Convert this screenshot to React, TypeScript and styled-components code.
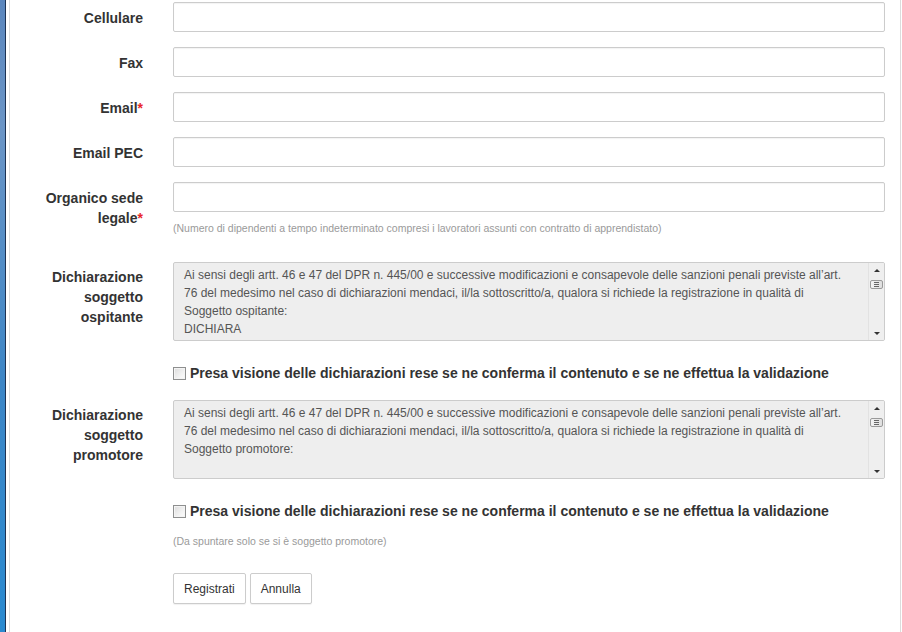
import React from 'react';
import styled, { createGlobalStyle } from 'styled-components';

const GlobalStyle = createGlobalStyle`
  html, body {
    margin: 0;
    padding: 0;
    background: #fff;
    font-family: "Liberation Sans", Arial, sans-serif;
    color: #333;
    overflow: hidden;
  }
`;

const Page = styled.div`
  display: flex;
  height: 632px;
  width: 902px;
`;

const EdgeStrip = styled.div`
  width: 5px;
  flex-shrink: 0;
  background: linear-gradient(180deg, #5a86bd 0%, #6b95c6 20%, #3d86c6 60%, #2a8ad0 100%);
  border-right: 1px solid #1d3354;
  margin-right: 3px;
`;

const Panel = styled.div`
  width: 890px;
  border-left: 1px solid #dcdcdc;
  border-right: 1px solid #dcdcdc;
`;

const Form = styled.form`
  padding: 2px 15px 0 0;
`;

const Row = styled.div<{ $gap?: number }>`
  display: grid;
  grid-template-columns: 163px 1fr;
  margin-bottom: ${p => (p.$gap ?? 15)}px;
`;

const Label = styled.label<{ $top?: number }>`
  padding: ${p => p.$top ?? 6}px 30px 0 15px;
  text-align: right;
  font-weight: bold;
  font-size: 14px;
  line-height: 20px;
  color: #333;
`;

const Required = styled.span`
  color: #e8262b;
`;

const Field = styled.div`
  display: flex;
  flex-direction: column;
  min-width: 0;
`;

const Input = styled.input`
  box-sizing: border-box;
  height: 30px;
  width: 100%;
  border: 1px solid #ccc;
  border-radius: 2px;
  box-shadow: inset 0 1px 1px rgba(0, 0, 0, 0.05);
  padding: 4px 10px;
  font: 12px "Liberation Sans", Arial, sans-serif;
  color: #555;
  background: #fff;
`;

const Help = styled.span<{ $top?: number; $bottom?: number }>`
  margin-top: ${p => p.$top ?? 8}px;
  margin-bottom: ${p => p.$bottom ?? 0}px;
  font-size: 10.5px;
  line-height: 16px;
  color: #9a9a9a;
`;

const TextBox = styled.div`
  box-sizing: border-box;
  display: flex;
  height: 79px;
  border: 1px solid #ccc;
  border-radius: 2px;
  background: #eee;
  overflow: hidden;
`;

const ReadOnlyText = styled.textarea`
  flex: 1;
  min-width: 0;
  border: none;
  resize: none;
  background: transparent;
  overflow: hidden;
  padding: 3px 20px 3px 10px;
  margin: 0;
  font: 12px/18px "Liberation Sans", Arial, sans-serif;
  color: #555;
  outline: none;
`;

const ScrollTrack = styled.div`
  width: 16px;
  flex-shrink: 0;
  border-left: 1px solid #e2e2e2;
  background: #efefef;
  display: flex;
  flex-direction: column;
  align-items: center;
  padding: 6px 0 5px;
  box-sizing: border-box;
`;

const Arrow = styled.span<{ $down?: boolean }>`
  width: 0;
  height: 0;
  border-left: 3px solid transparent;
  border-right: 3px solid transparent;
  ${p => (p.$down ? 'border-top: 3px solid #333;' : 'border-bottom: 3px solid #333;')}
  ${p => (p.$down ? 'margin-top: auto;' : '')}
`;

const Thumb = styled.span`
  box-sizing: border-box;
  margin-top: 8px;
  width: 13px;
  height: 9px;
  border: 1px solid #9a9a9a;
  border-radius: 2px;
  background: linear-gradient(90deg, #f4f4f4, #dedede);
  display: flex;
  flex-direction: column;
  align-items: center;
  justify-content: center;
  gap: 1px;
`;

const Grip = styled.span`
  width: 5px;
  height: 1px;
  background: #666;
`;

const CheckRow = styled.label`
  display: flex;
  align-items: center;
  gap: 4px;
  padding-top: 7px;
  font-weight: bold;
  font-size: 14px;
  line-height: 20px;
  color: #333;
`;

const CheckBox = styled.span`
  box-sizing: border-box;
  width: 13px;
  height: 13px;
  flex-shrink: 0;
  border: 1px solid #8e8f8f;
  background: linear-gradient(135deg, #dcdcdc 0%, #f2f2f2 60%, #fdfdfd 100%);
  box-shadow: inset 0 0 0 1px #f4f4f4;
`;

const Buttons = styled.div`
  display: flex;
  gap: 4px;
`;

const Button = styled.button`
  box-sizing: border-box;
  height: 31px;
  padding: 0 10px;
  border: 1px solid #ccc;
  border-radius: 2px;
  background: #fff;
  box-shadow: 0 1px 1px rgba(0, 0, 0, 0.06);
  font: 12px "Liberation Sans", Arial, sans-serif;
  color: #333;
`;

const Declaration: React.FC<{ text: string }> = ({ text }) => (
  <TextBox>
    <ReadOnlyText readOnly value={text} />
    <ScrollTrack>
      <Arrow />
      <Thumb>
        <Grip />
        <Grip />
        <Grip />
      </Thumb>
      <Arrow $down />
    </ScrollTrack>
  </TextBox>
);

const intro =
  "Ai sensi degli artt. 46 e 47 del DPR n. 445/00 e successive modificazioni e consapevole delle sanzioni penali previste all\u2019art. 76 del medesimo nel caso di dichiarazioni mendaci, il/la sottoscritto/a, qualora si richiede la registrazione in qualit\u00e0 di ";

const checkText =
  'Presa visione delle dichiarazioni rese se ne conferma il contenuto e se ne effettua la validazione';

const App: React.FC = () => (
  <>
    <GlobalStyle />
    <Page>
      <EdgeStrip />
      <Panel>
        <Form>
          <Row>
            <Label>Cellulare</Label>
            <Field><Input type="text" /></Field>
          </Row>
          <Row>
            <Label>Fax</Label>
            <Field><Input type="text" /></Field>
          </Row>
          <Row>
            <Label>Email<Required>*</Required></Label>
            <Field><Input type="email" /></Field>
          </Row>
          <Row>
            <Label>Email PEC</Label>
            <Field><Input type="email" /></Field>
          </Row>
          <Row $gap={26}>
            <Label>Organico sede legale<Required>*</Required></Label>
            <Field>
              <Input type="text" />
              <Help>
                (Numero di dipendenti a tempo indeterminato compresi i lavoratori assunti con contratto di apprendistato)
              </Help>
            </Field>
          </Row>
          <Row>
            <Label $top={5}>Dichiarazione soggetto ospitante</Label>
            <Field>
              <Declaration text={intro + 'Soggetto ospitante:\nDICHIARA\n'} />
            </Field>
          </Row>
          <Row $gap={17}>
            <span />
            <CheckRow>
              <CheckBox />
              {checkText}
            </CheckRow>
          </Row>
          <Row>
            <Label $top={5}>Dichiarazione soggetto promotore</Label>
            <Field>
              <Declaration text={intro + 'Soggetto promotore:\n'} />
            </Field>
          </Row>
          <Row $gap={0}>
            <span />
            <Field>
              <CheckRow>
                <CheckBox />
                {checkText}
              </CheckRow>
              <Help $top={12} $bottom={24}>(Da spuntare solo se si è soggetto promotore)</Help>
              <Buttons>
                <Button type="button">Registrati</Button>
                <Button type="button">Annulla</Button>
              </Buttons>
            </Field>
          </Row>
        </Form>
      </Panel>
    </Page>
  </>
);

export default App;
